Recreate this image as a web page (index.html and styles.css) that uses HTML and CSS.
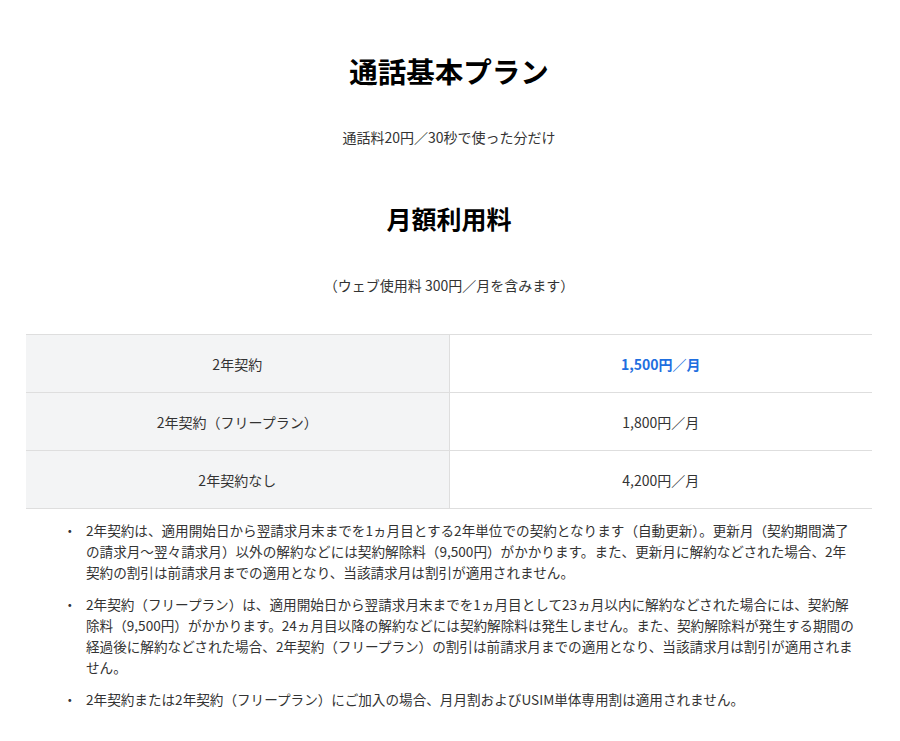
FILE: index.html
```html
<!DOCTYPE html>
<html lang="ja">
<head>
<meta charset="utf-8">
<title>通話基本プラン</title>
<link rel="stylesheet" href="styles.css">
</head>
<body>
<main class="page">
  <h1 class="title">通話基本プラン</h1>
  <p class="lead">通話料20円／30秒で使った分だけ</p>
  <h2 class="subtitle">月額利用料</h2>
  <p class="lead note">（ウェブ使用料 300円／月を含みます）</p>
  <table class="price-table">
    <tbody>
      <tr>
        <th>2年契約</th>
        <td class="highlight">1,500円／月</td>
      </tr>
      <tr>
        <th>2年契約（フリープラン）</th>
        <td>1,800円／月</td>
      </tr>
      <tr>
        <th>2年契約なし</th>
        <td>4,200円／月</td>
      </tr>
    </tbody>
  </table>
  <ul class="notes">
    <li><span class="bullet">・</span><span class="text">2年契約は、適用開始日から翌請求月末までを1ヵ月目とする2年単位での契約となります（自動更新）。更新月（契約期間満了の請求月～翌々請求月）以外の解約などには契約解除料（9,500円）がかかります。また、更新月に解約などされた場合、2年契約の割引は前請求月までの適用となり、当該請求月は割引が適用されません。</span></li>
    <li><span class="bullet">・</span><span class="text">2年契約（フリープラン）は、適用開始日から翌請求月末までを1ヵ月目として23ヵ月以内に解約などされた場合には、契約解除料（9,500円）がかかります。24ヵ月目以降の解約などには契約解除料は発生しません。また、契約解除料が発生する期間の経過後に解約などされた場合、2年契約（フリープラン）の割引は前請求月までの適用となり、当該請求月は割引が適用されません。</span></li>
    <li><span class="bullet">・</span><span class="text">2年契約または2年契約（フリープラン）にご加入の場合、月月割およびUSIM単体専用割は適用されません。</span></li>
  </ul>
</main>
</body>
</html>
```
FILE: styles.css
```css
html, body {
  margin: 0;
  padding: 0;
  background: #ffffff;
}

body {
  font-family: "Noto Sans CJK JP", "Noto Sans", sans-serif;
  color: #333333;
}

.page {
  padding: 51px 28px 0 26px;
}

.title {
  margin: 0;
  font-size: 28.5px;
  line-height: 40px;
  font-weight: 700;
  text-align: center;
  color: #000000;
}

.lead {
  margin: 36px 0 0;
  font-size: 14px;
  line-height: 21px;
  text-align: center;
  text-spacing-trim: space-all;
}

.subtitle {
  margin: 53px 0 0;
  font-size: 25px;
  line-height: 34px;
  font-weight: 700;
  text-align: center;
  color: #000000;
}

.note {
  margin-top: 40px;
}

.price-table {
  width: 100%;
  margin-top: 38px;
  border-collapse: collapse;
  font-size: 14px;
  text-spacing-trim: space-all;
}

.price-table th,
.price-table td {
  height: 57px;
  padding: 0;
  border-top: 1px solid #dedede;
  border-bottom: 1px solid #dedede;
  text-align: center;
  vertical-align: middle;
  font-weight: 400;
  width: 50%;
}

.price-table th {
  background: #f3f4f5;
  border-right: 1px solid #dedede;
}

.price-table td.highlight {
  color: #1f6fe0;
  font-weight: 700;
}

.notes {
  list-style: none;
  margin: 11px 0 0;
  padding: 0 0 0 37px;
  width: 792px;
  font-size: 13.6px;
  line-height: 21px;
}

.notes li {
  display: flex;
  margin-bottom: 11px;
}

.bullet {
  flex: 0 0 23px;
}

.text {
  flex: 1 1 auto;
}
```
